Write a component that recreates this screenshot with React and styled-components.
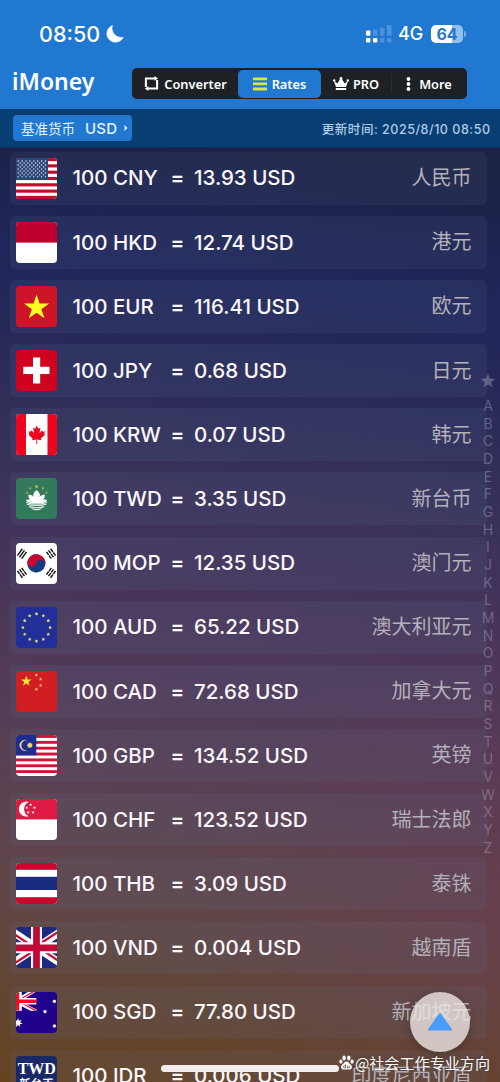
// Imports
import React from 'react';
import styled, { createGlobalStyle } from 'styled-components';

// Helpers
const starPoints = (cx, cy, outer, inner, spikes = 5, turn = 0) => {
	const points = [];
	for (let i = 0; i < spikes * 2; i++) {
		const radius = i % 2 === 0 ? outer : inner;
		const angle = -Math.PI / 2 + (i * Math.PI) / spikes + turn;
		points.push(`${(cx + radius * Math.cos(angle)).toFixed(2)},${(cy + radius * Math.sin(angle)).toFixed(2)}`);
	}
	return points.join(' ');
};

const Star = ({ x, y, r, fill = '#fff', spikes = 5, inner = 0.4, turn = 0 }) => {
	return <polygon points={ starPoints(x, y, r, r * inner, spikes, turn) } fill={ fill }/>;
};

const Stripes = ({ count, color }) => {
	const size = 41 / count;
	return (
		<>
			<rect width="41" height="41" fill="#fff"/>
			{
				Array.from({ length: Math.ceil(count / 2) }, (_, i) => {
					return <rect key={ i } y={ i * 2 * size } width="41" height={ size } fill={ color }/>;
				})
			}
		</>
	);
};

// Flags
const Usa = () => (
	<>
		<Stripes count={ 13 } color="#c20b2a"/>
		<rect width="32" height="21.5" fill="#2d4679"/>
		{
			Array.from({ length: 9 }, (_, row) => {
				const count = row % 2 === 0 ? 8 : 7;
				return Array.from({ length: count }, (_, i) => (
					<circle key={ `${row}-${i}` } cx={ 2.2 + i * 3.9 + (row % 2 ? 1.95 : 0) } cy={ 3 + row * 1.98 } r="0.68" fill="#fff"/>
				));
			})
		}
	</>
);

const Indonesia = () => (
	<>
		<rect width="41" height="41" fill="#fff"/>
		<rect width="41" height="20.6" fill="#c0002f"/>
	</>
);

const Vietnam = () => (
	<>
		<rect width="41" height="41" fill="#ce1528"/>
		<Star x={ 20.6 } y={ 21.6 } r={ 13.2 } inner={ 0.382 } fill="#ffff26"/>
	</>
);

const Switzerland = () => (
	<>
		<rect width="41" height="41" fill="#d0021f"/>
		<path d="M17 7.5h7.2v9.3h9.3V24h-9.3v9.5H17V24H7.3v-7.2H17z" fill="#fff"/>
	</>
);

const Canada = () => (
	<>
		<rect width="41" height="41" fill="#fff"/>
		<rect width="10" height="41" fill="#f0051e"/>
		<rect x="31.5" width="9.5" height="41" fill="#f0051e"/>
		<path
			d="M20.6 11.5l1.8 3.3 2-1-.8 5.1 2.5-2.6.7 1.4 2.2-.4-.8 2.6 1 .7-4.3 3.8.5 1.8-4.3-.6.2 4.4h-1l.1-4.4-4.3.6.5-1.8-4.3-3.8 1-.7-.8-2.6 2.2.4.7-1.4 2.5 2.6-.8-5.1 2 1z"
			fill="#e8091d"
		/>
	</>
);

const Macau = () => (
	<>
		<rect width="41" height="41" fill="#327a5c"/>
		<Star x={ 20.6 } y={ 8.6 } r={ 2.4 } fill="#d5a94c"/>
		<Star x={ 14.2 } y={ 10.3 } r={ 1.6 } fill="#d5a94c"/>
		<Star x={ 27 } y={ 10.3 } r={ 1.6 } fill="#d5a94c"/>
		<Star x={ 11 } y={ 14.7 } r={ 1.5 } fill="#d5a94c"/>
		<Star x={ 30.4 } y={ 14.7 } r={ 1.5 } fill="#d5a94c"/>
		<path d="M20.6 12c3 2.5 3.8 4.8 3 7 1.5-1.7 3.3-2.3 5.2-2.4.2 2.3-.4 3.8-1.7 5.1 1.7-.4 3-.2 4.2.6-2.5 4.4-18.9 4.4-21.4 0 1.2-.8 2.5-1 4.2-.6-1.3-1.3-1.9-2.8-1.7-5.1 1.9.1 3.7.7 5.2 2.4-.8-2.2 0-4.5 3-7z" fill="#fff"/>
		<path d="M10.2 24.2c4 2.4 16.8 2.4 20.8 0M10.8 26.2c5 1.8 14.6 1.8 19.6 0M13 28.6c4.8 1.4 10.4 1.4 15.2 0" fill="none" stroke="#e6efe9" strokeWidth="1.1"/>
		<path d="M15 30.2c3.7.9 7.5.9 11.2 0-2.6 2.6-8.6 2.6-11.2 0z" fill="#fff"/>
	</>
);

const Trigram = ({ x, y, angle, broken }) => (
	<g transform={ `translate(${x} ${y}) rotate(${angle})` } stroke="#151515" strokeWidth="1.45">
		<path d="M-4.2-2.6h8.4M-4.2 0h8.4M-4.2 2.6h8.4"/>
		{ broken && <path d="M0-3.8v7.6" stroke="#fff" strokeWidth=".7"/> }
	</g>
);

const Korea = () => (
	<>
		<rect width="41" height="41" fill="#fff"/>
		<g transform="rotate(12 20.3 20.3)">
			<circle cx="20.3" cy="20.3" r="9.1" fill="#123b82"/>
			<path d="M11.2 20.3a9.1 9.1 0 0 1 18.2 0 4.55 4.55 0 0 0-9.1 0 4.55 4.55 0 0 1-9.1 0z" fill="#c6092f"/>
		</g>
		<Trigram x={ 6 } y={ 10.7 } angle={ -54 }/>
		<Trigram x={ 35 } y={ 10.7 } angle={ 54 } broken/>
		<Trigram x={ 6 } y={ 29.8 } angle={ 54 } broken/>
		<Trigram x={ 35 } y={ 29.8 } angle={ -54 } broken/>
	</>
);

const Europe = () => (
	<>
		<rect width="41" height="41" fill="#232f98"/>
		{
			Array.from({ length: 12 }, (_, i) => {
				const angle = (i * Math.PI) / 6;
				return <Star key={ i } x={ 20.5 + 13.6 * Math.sin(angle) } y={ 20.5 - 13.6 * Math.cos(angle) } r={ 1.9 } inner={ 0.55 } fill="#dfdc67"/>;
			})
		}
	</>
);

const China = () => (
	<>
		<rect width="41" height="41" fill="#d01e22"/>
		<Star x={ 10.3 } y={ 10.2 } r={ 5.6 } fill="#fbe336"/>
		<Star x={ 20.4 } y={ 4.1 } r={ 1.8 } inner={ 0.5 } fill="#f3bd58"/>
		<Star x={ 24.6 } y={ 8.2 } r={ 1.8 } inner={ 0.5 } fill="#f3bd58"/>
		<Star x={ 24.6 } y={ 14.4 } r={ 1.8 } inner={ 0.5 } fill="#f3bd58"/>
		<Star x={ 20.4 } y={ 18.3 } r={ 1.8 } inner={ 0.5 } fill="#f3bd58"/>
	</>
);

const Malaysia = () => (
	<>
		<Stripes count={ 14 } color="#cf1538"/>
		<rect width="20.3" height="20.3" fill="#1f2c92"/>
		<path d="M12 5.7a5.5 5.5 0 1 0 0 9.4 5 5 0 1 1 0-9.4z" fill="#f5dc8c"/>
		<Star x={ 13.9 } y={ 10.3 } r={ 3 } inner={ 0.7 } spikes={ 14 } fill="#f3d45c"/>
	</>
);

const Singapore = () => (
	<>
		<rect width="41" height="41" fill="#fff"/>
		<rect width="41" height="20.4" fill="#df1b43"/>
		<path d="M12.8 3a7.5 7.5 0 1 0 0 14.2 7.7 7.7 0 0 1 0-14.2z" fill="#fff"/>
		<Star x={ 14.6 } y={ 5.8 } r={ 1.7 }/>
		<Star x={ 10.7 } y={ 8.7 } r={ 1.7 }/>
		<Star x={ 18.5 } y={ 8.7 } r={ 1.7 }/>
		<Star x={ 12.2 } y={ 13.4 } r={ 1.7 }/>
		<Star x={ 17 } y={ 13.4 } r={ 1.7 }/>
	</>
);

const Thailand = () => (
	<>
		<rect width="41" height="41" fill="#fff"/>
		<rect width="41" height="6.8" fill="#c8082c"/>
		<rect y="13.8" width="41" height="13.2" fill="#1b2b80"/>
		<rect y="34.2" width="41" height="6.8" fill="#c8082c"/>
	</>
);

const Britain = () => (
	<>
		<rect width="41" height="41" fill="#1c2a82"/>
		<path d="M-6 3L47 38M47 3L-6 38" stroke="#fff" strokeWidth="7.4"/>
		<path d="M-6 4.4L20.5 22M47 1.6L20.5 19M47 36.8L20.5 19M-6 39.4L20.5 22" stroke="#c5103a" strokeWidth="2.3"/>
		<path d="M20.5 0v41M0 20.8h41" stroke="#fff" strokeWidth="11"/>
		<path d="M20.5 0v41M0 20.8h41" stroke="#c20836" strokeWidth="6.8"/>
	</>
);

const Australia = () => (
	<>
		<rect width="41" height="41" fill="#20038a"/>
		<path d="M0 9.5L18 -1.5M0 9L20 19.5" stroke="#fff" strokeWidth="4"/>
		<path d="M3 8L19-1.2M2 9L20 18.6" stroke="#ee1037" strokeWidth="1.3"/>
		<path d="M2.5 0v19M0 9.3h20.3" stroke="#fff" strokeWidth="6.6"/>
		<path d="M1.5 0v18.6M0 9.3h20.3" stroke="#f30b28" strokeWidth="3.4"/>
		<rect y="18.8" width="21" height="4" fill="#20038a"/>
		<Star x={ 2 } y={ 30.8 } r={ 4.8 } spikes={ 7 } inner={ 0.45 }/>
		<Star x={ 29 } y={ 19.6 } r={ 2.1 } spikes={ 7 } inner={ 0.6 }/>
		<Star x={ 38.4 } y={ 9.4 } r={ 2.1 } spikes={ 7 } inner={ 0.6 }/>
		<Star x={ 38.4 } y={ 34 } r={ 2.1 } spikes={ 7 } inner={ 0.6 }/>
	</>
);

const Taiwan = () => (
	<>
		<rect width="41" height="41" fill="#192866"/>
		<FlagText x="20.8" y="18">TWD</FlagText>
		<FlagTextCn x="20.5" y="32">新台币</FlagTextCn>
	</>
);

// Data
const rates = [
	{ code: 'CNY', amount: '13.93', name: '人民币', flag: Usa },
	{ code: 'HKD', amount: '12.74', name: '港元', flag: Indonesia },
	{ code: 'EUR', amount: '116.41', name: '欧元', flag: Vietnam },
	{ code: 'JPY', amount: '0.68', name: '日元', flag: Switzerland },
	{ code: 'KRW', amount: '0.07', name: '韩元', flag: Canada },
	{ code: 'TWD', amount: '3.35', name: '新台币', flag: Macau },
	{ code: 'MOP', amount: '12.35', name: '澳门元', flag: Korea },
	{ code: 'AUD', amount: '65.22', name: '澳大利亚元', flag: Europe },
	{ code: 'CAD', amount: '72.68', name: '加拿大元', flag: China },
	{ code: 'GBP', amount: '134.52', name: '英镑', flag: Malaysia },
	{ code: 'CHF', amount: '123.52', name: '瑞士法郎', flag: Singapore },
	{ code: 'THB', amount: '3.09', name: '泰铢', flag: Thailand },
	{ code: 'VND', amount: '0.004', name: '越南盾', flag: Britain },
	{ code: 'SGD', amount: '77.80', name: '新加坡元', flag: Australia },
	{ code: 'IDR', amount: '0.006', name: '印度尼西亚盾', flag: Taiwan },
];

const letters = 'ABCDEFGHIJKLMNOPQRSTUVWXYZ'.split('');

// Components
const StatusBar = () => (
	<Status>
		<Clock>08:50</Clock>
		<svg width="18" height="18" viewBox="0 0 18 18">
			<path d="M6.4.6A8.6 8.6 0 1 0 17.3 12.2 9.2 9.2 0 0 1 6.4.6z" fill="#fff" stroke="#fff" strokeWidth=".6" strokeLinejoin="round"/>
		</svg>
		<StatusRight>
			<svg width="26" height="18" viewBox="0 0 26 18">
				<g fill="#fff">
					<rect y="5.6" width="4.4" height="5.2" rx="1"/>
					<rect y="13" width="4.4" height="4.6" rx="1"/>
					<rect x="7" y="13" width="4.4" height="4.6" rx="1"/>
				</g>
				<g fill="#4b91dc">
					<rect x="7" y="4.6" width="4.4" height="6.2" rx="1"/>
					<rect x="14" y="2.4" width="4.4" height="8.4" rx="1"/>
					<rect x="21" y="0" width="4.4" height="10.8" rx="1"/>
					<rect x="14" y="13" width="4.4" height="4.6" rx="1"/>
					<rect x="21" y="13" width="4.4" height="4.6" rx="1"/>
				</g>
			</svg>
			<Network>4G</Network>
			<Battery>64</Battery>
			<BatteryTip/>
		</StatusRight>
	</Status>
);

const Navigation = () => (
	<TopBar>
		<Brand>iMoney</Brand>
		<Tabs>
			<Tab $width={ 105 } $gap={ 5 }>
				<svg width="15" height="15" viewBox="0 0 15 15">
					<path d="M1.9 9.6V2.4h9.4M13.1 5.4v7.2H3.7" fill="none" stroke="#fff" strokeWidth="2"/>
					<path d="M10.6 0l3.4 2.4-3.4 2.4zM4.4 10.2v4.8L.8 12.6z" fill="#fff"/>
					<path d="M1.9 8v3M13.1 4v4" stroke="#fff" strokeWidth="2"/>
				</svg>
				Converter
			</Tab>
			<Tab $width={ 83 } $gap={ 5 } $active>
				<svg width="14" height="14" viewBox="0 0 14 14">
					<path d="M0 1.8h14M0 6.8h14M0 12h14" stroke="#dce83d" strokeWidth="2.8"/>
				</svg>
				Rates
			</Tab>
			<Tab $width={ 70 } $gap={ 4 }>
				<svg width="16" height="14" viewBox="0 0 16 14">
					<path d="M.8 3.8l3.6 2.6L7.1 2.1h1.8l2.7 4.3 3.6-2.6L13 9.9H3zM2.8 11.1h10.4V13H2.8z" fill="#fff"/>
					<circle cx="8" cy="1.5" r="1.4" fill="#fff"/>
					<circle cx="1.2" cy="3.4" r="1.2" fill="#fff"/>
					<circle cx="14.8" cy="3.4" r="1.2" fill="#fff"/>
				</svg>
				PRO
			</Tab>
			<Tab $width={ 75 } $gap={ 8 } $divided>
				<svg width="5" height="14" viewBox="0 0 5 14">
					<circle cx="2.5" cy="2" r="1.9" fill="#fff"/>
					<circle cx="2.5" cy="7" r="1.9" fill="#fff"/>
					<circle cx="2.5" cy="12" r="1.9" fill="#fff"/>
				</svg>
				More
			</Tab>
		</Tabs>
	</TopBar>
);

const RateRow = ({ code, amount, name, flag: FlagArt }) => (
	<Row>
		<Flag viewBox="0 0 41 41">
			<FlagArt/>
		</Flag>
		<Value>100 { code }</Value>
		<Equals>=</Equals>
		<Value>{ amount } USD</Value>
		<CurrencyName>{ name }</CurrencyName>
	</Row>
);

const App = () => {

	// Returns
	return (
		<Screen>
			<GlobalStyle/>
			<StatusBar/>
			<Navigation/>
			<InfoBar>
				<BaseButton>
					<span>基准货币</span>
					<BaseCode>USD</BaseCode>
					<svg width="4" height="8" viewBox="0 0 4 8">
						<path d="M.5.8L3.5 4 .5 7.2z" fill="#d6e8fb"/>
					</svg>
				</BaseButton>
				<Updated>更新时间: 2025/8/10 08:50</Updated>
			</InfoBar>
			<List>
				{
					rates.map((rate) => {
						return <RateRow key={ rate.code } { ...rate }/>;
					})
				}
			</List>
			<Index>
				<svg width="16" height="16" viewBox="0 0 16 16">
					<Star x={ 8 } y={ 8.2 } r={ 7.4 } inner={ 0.45 } fill="currentColor"/>
				</svg>
				{ letters.map((letter) => <Letter key={ letter }>{ letter }</Letter>) }
			</Index>
			<ScrollTop>
				<svg width="26" height="20" viewBox="0 0 26 20">
					<path d="M13 2L24 17.5H2z" fill="#4a9cfa" stroke="#4a9cfa" strokeWidth="2" strokeLinejoin="round"/>
				</svg>
			</ScrollTop>
			<HomeIndicator/>
			<Watermark>
				<svg width="15" height="15" viewBox="0 0 15 15" fill="#fff">
					<ellipse cx="5.1" cy="3" rx="1.7" ry="2.4"/>
					<ellipse cx="9.8" cy="3" rx="1.7" ry="2.4"/>
					<ellipse cx="1.9" cy="6.6" rx="1.6" ry="2.1"/>
					<ellipse cx="13.1" cy="6.6" rx="1.6" ry="2.1"/>
					<path d="M7.5 6.4c2 0 2.8 2 4.3 3.4 2.2 2.2.8 5-1.6 4.8-1.8-.3-3.6-.3-5.4 0-2.4.2-3.8-2.6-1.6-4.8C4.7 8.4 5.5 6.4 7.5 6.4z"/>
					<path d="M6.6 9.4v3.4H5.3a1 1 0 0 1 0-2h1.3M8.4 10.6v2.2h1.9v-2.2" fill="none" stroke="#6b4a38" strokeWidth=".8"/>
				</svg>
				@社会工作专业方向
			</Watermark>
		</Screen>
	);

};

// Styled
const GlobalStyle = createGlobalStyle`
	* {
		box-sizing: border-box;
	}
	body {
		margin: 0;
		background: #222754;
		font-family: Inter, "Noto Sans CJK SC", sans-serif;
	}
	svg {
		display: block;
		flex-shrink: 0;
	}
`;

const Screen = styled.main`
	position: relative;
	display: flex;
	flex-direction: column;
	width: 500px;
	height: 1082px;
	overflow: hidden;
	background:
		radial-gradient(circle at 100% 85%, rgba(120, 50, 80, 0.28), rgba(120, 50, 80, 0) 300px),
		linear-gradient(187deg, #1c2146 16%, #20265a 27%, #282a58 35%, #34305a 43%, #44345a 53%, #523b58 65%, #5c424e 76%, #604646 84%, #624530 93%, #67421f 100%);
`;

const Status = styled.header`
	display: flex;
	align-items: center;
	flex-shrink: 0;
	height: 66px;
	padding: 1px 34px 0 39px;
	background: #2178d0;
	color: #fff;
`;

const Clock = styled.span`
	width: 67px;
	font-size: 21.5px;
	font-weight: 500;
`;

const StatusRight = styled.div`
	display: flex;
	align-items: center;
	margin-left: auto;
`;

const Network = styled.span`
	width: 33px;
	margin-left: 6px;
	font-size: 18px;
	font-weight: 500;
`;

const Battery = styled.div`
	width: 32px;
	height: 18px;
	border-radius: 5px;
	background: linear-gradient(90deg, #fff 66%, #94bfed 66%);
	color: #2678ca;
	font-size: 16px;
	font-weight: 700;
	line-height: 18px;
	text-align: center;
`;

const BatteryTip = styled.div`
	width: 2px;
	height: 6px;
	margin-left: 1px;
	border-radius: 0 3px 3px 0;
	background: #79afe8;
`;

const TopBar = styled.nav`
	display: flex;
	flex-shrink: 0;
	justify-content: space-between;
	height: 43px;
	padding: 2px 33px 0 12px;
	background: #2178d0;
`;

const Brand = styled.h1`
	margin: 0;
	color: #fff;
	font-family: "Noto Sans", "Open Sans", sans-serif;
	font-size: 23px;
	font-weight: 600;
	line-height: 26px;
`;

const Tabs = styled.div`
	display: flex;
	align-items: center;
	width: 335px;
	height: 31px;
	padding: 0 1px;
	border-radius: 5px;
	background: #1d2126;
`;

const Tab = styled.div`
	display: flex;
	align-items: center;
	justify-content: center;
	gap: ${({ $gap }) => $gap}px;
	width: ${({ $width }) => $width}px;
	height: ${({ $divided }) => ($divided ? 19 : 28)}px;
	border-left: ${({ $divided }) => ($divided ? '1px solid #2a2e33' : 'none')};
	border-radius: ${({ $divided }) => ($divided ? 0 : 5)}px;
	background: ${({ $active }) => ($active ? '#2178d0' : 'none')};
	color: #fff;
	font-family: "Noto Sans", "Open Sans", sans-serif;
	font-size: 12.8px;
	font-weight: 600;
`;

const InfoBar = styled.div`
	display: flex;
	align-items: center;
	justify-content: space-between;
	flex-shrink: 0;
	height: 39px;
	padding: 0 10px 0 13px;
	border-bottom: 1px solid #0d2d5c;
	background: #083f72;
`;

const BaseButton = styled.div`
	display: flex;
	align-items: center;
	width: 119px;
	height: 26px;
	padding-left: 8px;
	border-radius: 4px;
	background: #2178d0;
	color: #e6f2ff;
	font-size: 13.5px;
`;

const BaseCode = styled.span`
	width: 39px;
	margin-left: 10px;
	font-size: 15px;
	font-weight: 500;
	letter-spacing: 0.2px;
`;

const Updated = styled.span`
	margin-right: -0.5px;
	color: #b1cbea;
	font-size: 12.5px;
	font-weight: 500;
	letter-spacing: 0.53px;
`;

const List = styled.section`
	display: flex;
	flex-direction: column;
	gap: 11.15px;
	padding: 3.7px 13.5px 0 9.5px;
`;

const Row = styled.article`
	display: grid;
	flex-shrink: 0;
	grid-template-columns: 56.5px 99px 22.5px auto 1fr;
	align-items: center;
	height: 53px;
	padding: 0 15px 0 6.5px;
	border-radius: 5px;
	background: rgba(100, 125, 160, 0.12);
`;

const Flag = styled.svg`
	width: 41px;
	height: 41px;
	border-radius: 4px;
`;

const FlagText = styled.text`
	fill: #fff;
	font-family: "Liberation Serif", serif;
	font-size: 16px;
	font-weight: 700;
	text-anchor: middle;
`;

const FlagTextCn = styled(FlagText)`
	font-family: "Noto Sans CJK SC", sans-serif;
	font-size: 11.5px;
`;

const Value = styled.span`
	margin-top: -0.6px;
	color: #fbf7fc;
	font-size: 20.5px;
	font-weight: 500;
	white-space: pre;
`;

const Equals = styled(Value)`
	margin-left: -1px;
	font-weight: 600;
`;

const CurrencyName = styled.span`
	color: #b3b0b9;
	font-size: 20px;
	line-height: 28px;
	text-align: right;
`;

const Index = styled.aside`
	position: absolute;
	top: 373px;
	right: 4px;
	display: flex;
	flex-direction: column;
	align-items: center;
	gap: 8px;
	width: 16px;
	color: rgba(190, 185, 205, 0.38);
`;

const Letter = styled.span`
	height: 17.68px;
	margin-bottom: -8px;
	font-size: 14px;
	line-height: 17.68px;
`;

const ScrollTop = styled.div`
	position: absolute;
	top: 992px;
	left: 410px;
	display: flex;
	align-items: center;
	justify-content: center;
	width: 60px;
	height: 60px;
	padding-bottom: 1px;
	border-radius: 50%;
	background: rgba(236, 230, 228, 0.8);
	box-shadow: 0 2px 10px rgba(0, 0, 0, 0.25);
`;

const HomeIndicator = styled.div`
	position: absolute;
	top: 1065px;
	left: 161px;
	width: 178px;
	height: 7px;
	border-radius: 4px;
	background: #f3eeed;
`;

const Watermark = styled.div`
	position: absolute;
	top: 1050px;
	left: 339px;
	display: flex;
	align-items: center;
	gap: 1px;
	height: 24px;
	color: #fff;
	font-family: "Noto Sans CJK SC", sans-serif;
	font-size: 15.1px;
	white-space: nowrap;
	text-shadow: 0 0 2px rgba(0, 0, 0, 0.4);
`;

// Export
export default App;
